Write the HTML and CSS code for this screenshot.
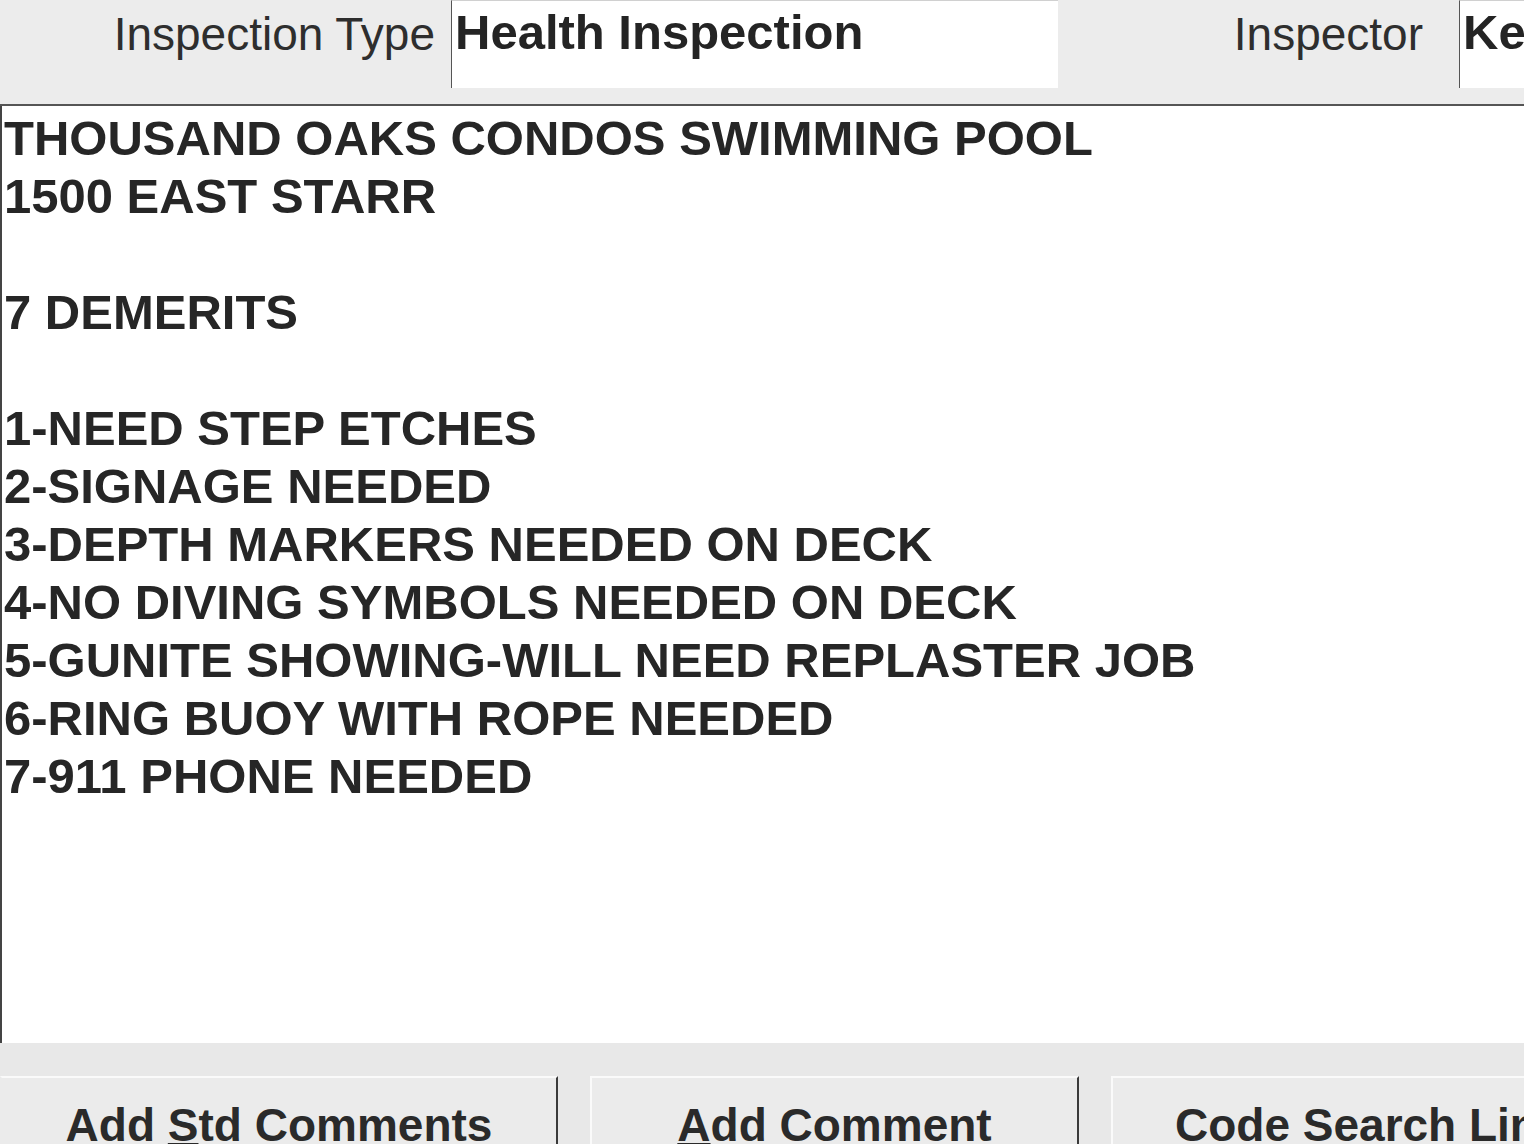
FILE: index.html
```html
<!DOCTYPE html>
<html>
<head>
<meta charset="utf-8">
<title>Inspection</title>
<link rel="stylesheet" href="styles.css">
</head>
<body>
<div class="app">
  <div class="topbar">
    <div class="label label-type">Inspection Type</div>
    <div class="field field-type">Health Inspection</div>
    <div class="label label-inspector">Inspector</div>
    <div class="field field-inspector">Ke</div>
  </div>
  <div class="notes">
    <div class="line">THOUSAND OAKS CONDOS SWIMMING POOL</div>
    <div class="line">1500 EAST STARR</div>
    <div class="line">&nbsp;</div>
    <div class="line">7 DEMERITS</div>
    <div class="line">&nbsp;</div>
    <div class="line">1-NEED STEP ETCHES</div>
    <div class="line">2-SIGNAGE NEEDED</div>
    <div class="line">3-DEPTH MARKERS NEEDED ON DECK</div>
    <div class="line">4-NO DIVING SYMBOLS NEEDED ON DECK</div>
    <div class="line">5-GUNITE SHOWING-WILL NEED REPLASTER JOB</div>
    <div class="line">6-RING BUOY WITH ROPE NEEDED</div>
    <div class="line">7-911 PHONE NEEDED</div>
  </div>
  <div class="buttons">
    <div class="btn btn-std">Add <u>S</u>td Comments</div>
    <div class="btn btn-add"><u>A</u>dd Comment</div>
    <div class="btn btn-code">Code Search Links</div>
  </div>
</div>
</body>
</html>
```

FILE: styles.css
```css
html, body {
  margin: 0;
  padding: 0;
}
body {
  width: 1524px;
  height: 1144px;
  overflow: hidden;
  background: #e8e8e8;
  font-family: "Liberation Sans", Arial, sans-serif;
  color: #262626;
}
.app {
  display: flex;
  flex-direction: column;
  width: 1524px;
  height: 1144px;
}
.topbar {
  display: flex;
  align-items: flex-start;
  height: 104px;
  flex: 0 0 auto;
  background: #ececec;
  border-bottom: 2px solid #555;
}
.label {
  font-size: 46px;
  line-height: 58px;
  padding-top: 5px;
  text-align: right;
  color: #2e2e2e;
  white-space: nowrap;
  box-sizing: border-box;
}
.label-type {
  width: 451px;
  padding-right: 16px;
}
.label-inspector {
  width: 401px;
  padding-right: 36px;
}
.field {
  height: 88px;
  box-sizing: border-box;
  background: #fff;
  border-left: 1px solid #555;
  border-top: 1px solid #d0d0d0;
  padding-left: 3px;
  padding-top: 2px;
  font-size: 49px;
  font-weight: bold;
  line-height: 58px;
  white-space: nowrap;
  overflow: hidden;
  color: #242424;
}
.field-type {
  width: 607px;
}
.field-inspector {
  flex: 1;
}
.notes {
  flex: 0 0 auto;
  height: 937px;
  box-sizing: border-box;
  background: #fff;
  border-left: 2px solid #444;
  padding: 3px 0 0 2px;
  font-size: 49px;
  font-weight: bold;
  line-height: 58px;
  color: #262626;
}
.line {
  white-space: nowrap;
}
.buttons {
  display: flex;
  gap: 32px;
  margin-top: 33px;
  flex: 1;
}
.btn {
  box-sizing: border-box;
  background: #ebebeb;
  border-top: 2px solid #fafafa;
  border-left: 2px solid #fafafa;
  border-right: 2px solid #3a3a3a;
  padding-top: 24px;
  font-size: 46px;
  font-weight: bold;
  line-height: 46px;
  text-align: center;
  white-space: nowrap;
  color: #2a2a2a;
  overflow: hidden;
}
.btn u {
  text-decoration-thickness: 2px;
  text-underline-offset: 2px;
}
.btn-std {
  width: 558px;
  border-left-color: #ebebeb;
}
.btn-add {
  width: 489px;
}
.btn-code {
  flex: 1;
  text-align: left;
  padding-left: 62px;
  border-right: none;
}
```
